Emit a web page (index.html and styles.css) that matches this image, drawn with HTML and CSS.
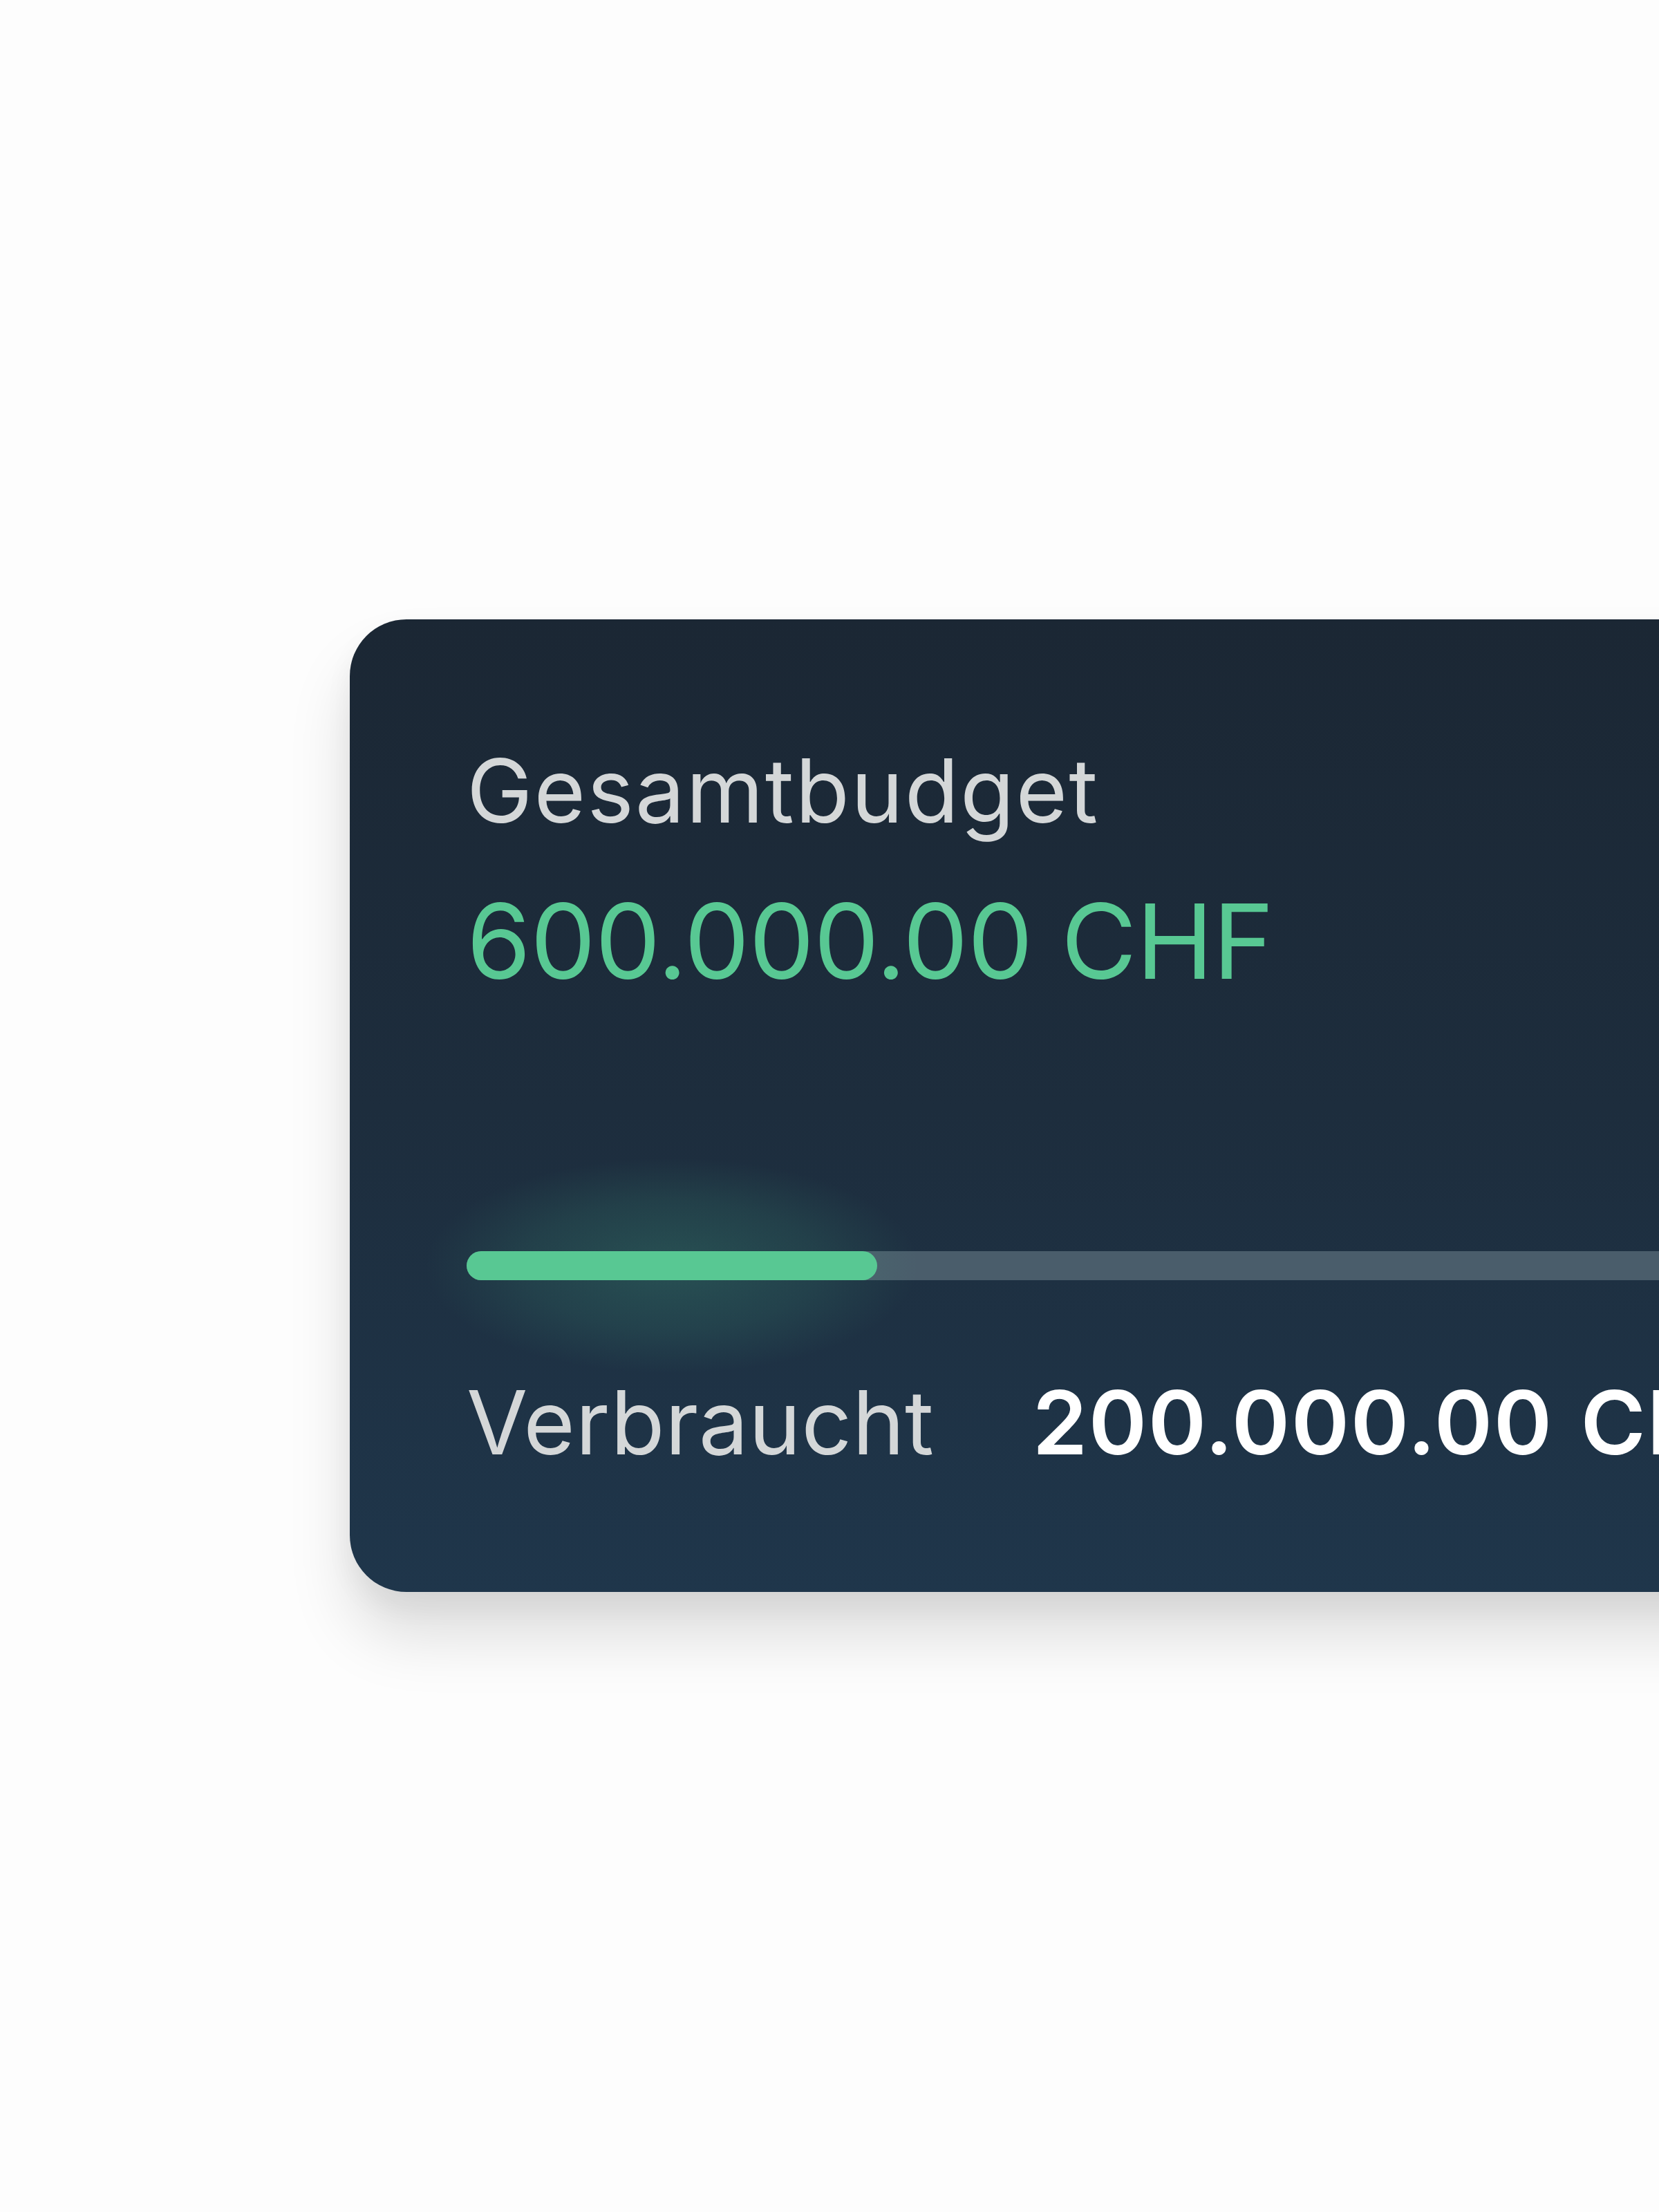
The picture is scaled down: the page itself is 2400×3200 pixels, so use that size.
FILE: index.html
```html
<!DOCTYPE html>
<html lang="de">
<head>
<meta charset="utf-8">
<title>Gesamtbudget</title>
<link rel="stylesheet" href="styles.css">
</head>
<body>
<main class="stage">
  <section class="card">
    <div class="label">Gesamtbudget</div>
    <div class="total">600.000.00 CHF</div>
    <div class="track">
      <div class="fill" style="width: 594px"></div>
    </div>
    <div class="row">
      <span class="label label-row">Verbraucht</span>
      <span class="value">200.000.00 CHF</span>
    </div>
  </section>
</main>
</body>
</html>
```

FILE: styles.css
```css
html, body {
  margin: 0;
  padding: 0;
  background: #fdfdfd;
  overflow: hidden;
}

.stage {
  width: 2400px;
  height: 3200px;
  overflow: hidden;
  padding: 896px 0 0 506px;
  box-sizing: border-box;
  font-family: "Inter", "Liberation Sans", sans-serif;
}

.card {
  width: 2400px;
  box-sizing: border-box;
  padding: 171px 0 169px 169px;
  border-radius: 82px;
  background: linear-gradient(180deg, #1b2734 0%, #1d2d3d 50%, #1f364b 100%);
  box-shadow: 0 64px 90px rgba(0, 0, 0, 0.13), 0 20px 40px rgba(0, 0, 0, 0.05);
  display: flex;
  flex-direction: column;
}

.label {
  font-size: 128px;
  line-height: 1.2;
  color: #d4d7d8;
  font-weight: 400;
  letter-spacing: 2px;
}

.label-row {
  letter-spacing: 0.5px;
}

.total {
  margin-top: 51px;
  font-size: 150px;
  line-height: 1.2;
  color: #58c893;
  font-weight: 400;
  letter-spacing: -0.8px;
}

.track {
  margin-top: 358px;
  height: 42px;
  background: #4a5d6b;
  border-radius: 21px 0 0 21px;
  position: relative;
  z-index: 0;
  isolation: isolate;
}

.fill {
  height: 100%;
  background: #58c893;
  border-radius: 21px;
  position: relative;
}

.fill::before {
  content: "";
  position: absolute;
  left: -60px;
  right: -60px;
  top: -135px;
  bottom: -135px;
  background: radial-gradient(ellipse closest-side, rgba(72, 185, 140, 0.24), rgba(72, 185, 140, 0.12) 60%, rgba(72, 185, 140, 0) 100%);
  z-index: -1;
}

.row {
  margin-top: 129px;
  display: flex;
  align-items: baseline;
  gap: 142px;
}

.value {
  font-size: 128px;
  line-height: 1.2;
  color: #ffffff;
  font-weight: 600;
  letter-spacing: 1.5px;
  word-spacing: 6px;
}
```
